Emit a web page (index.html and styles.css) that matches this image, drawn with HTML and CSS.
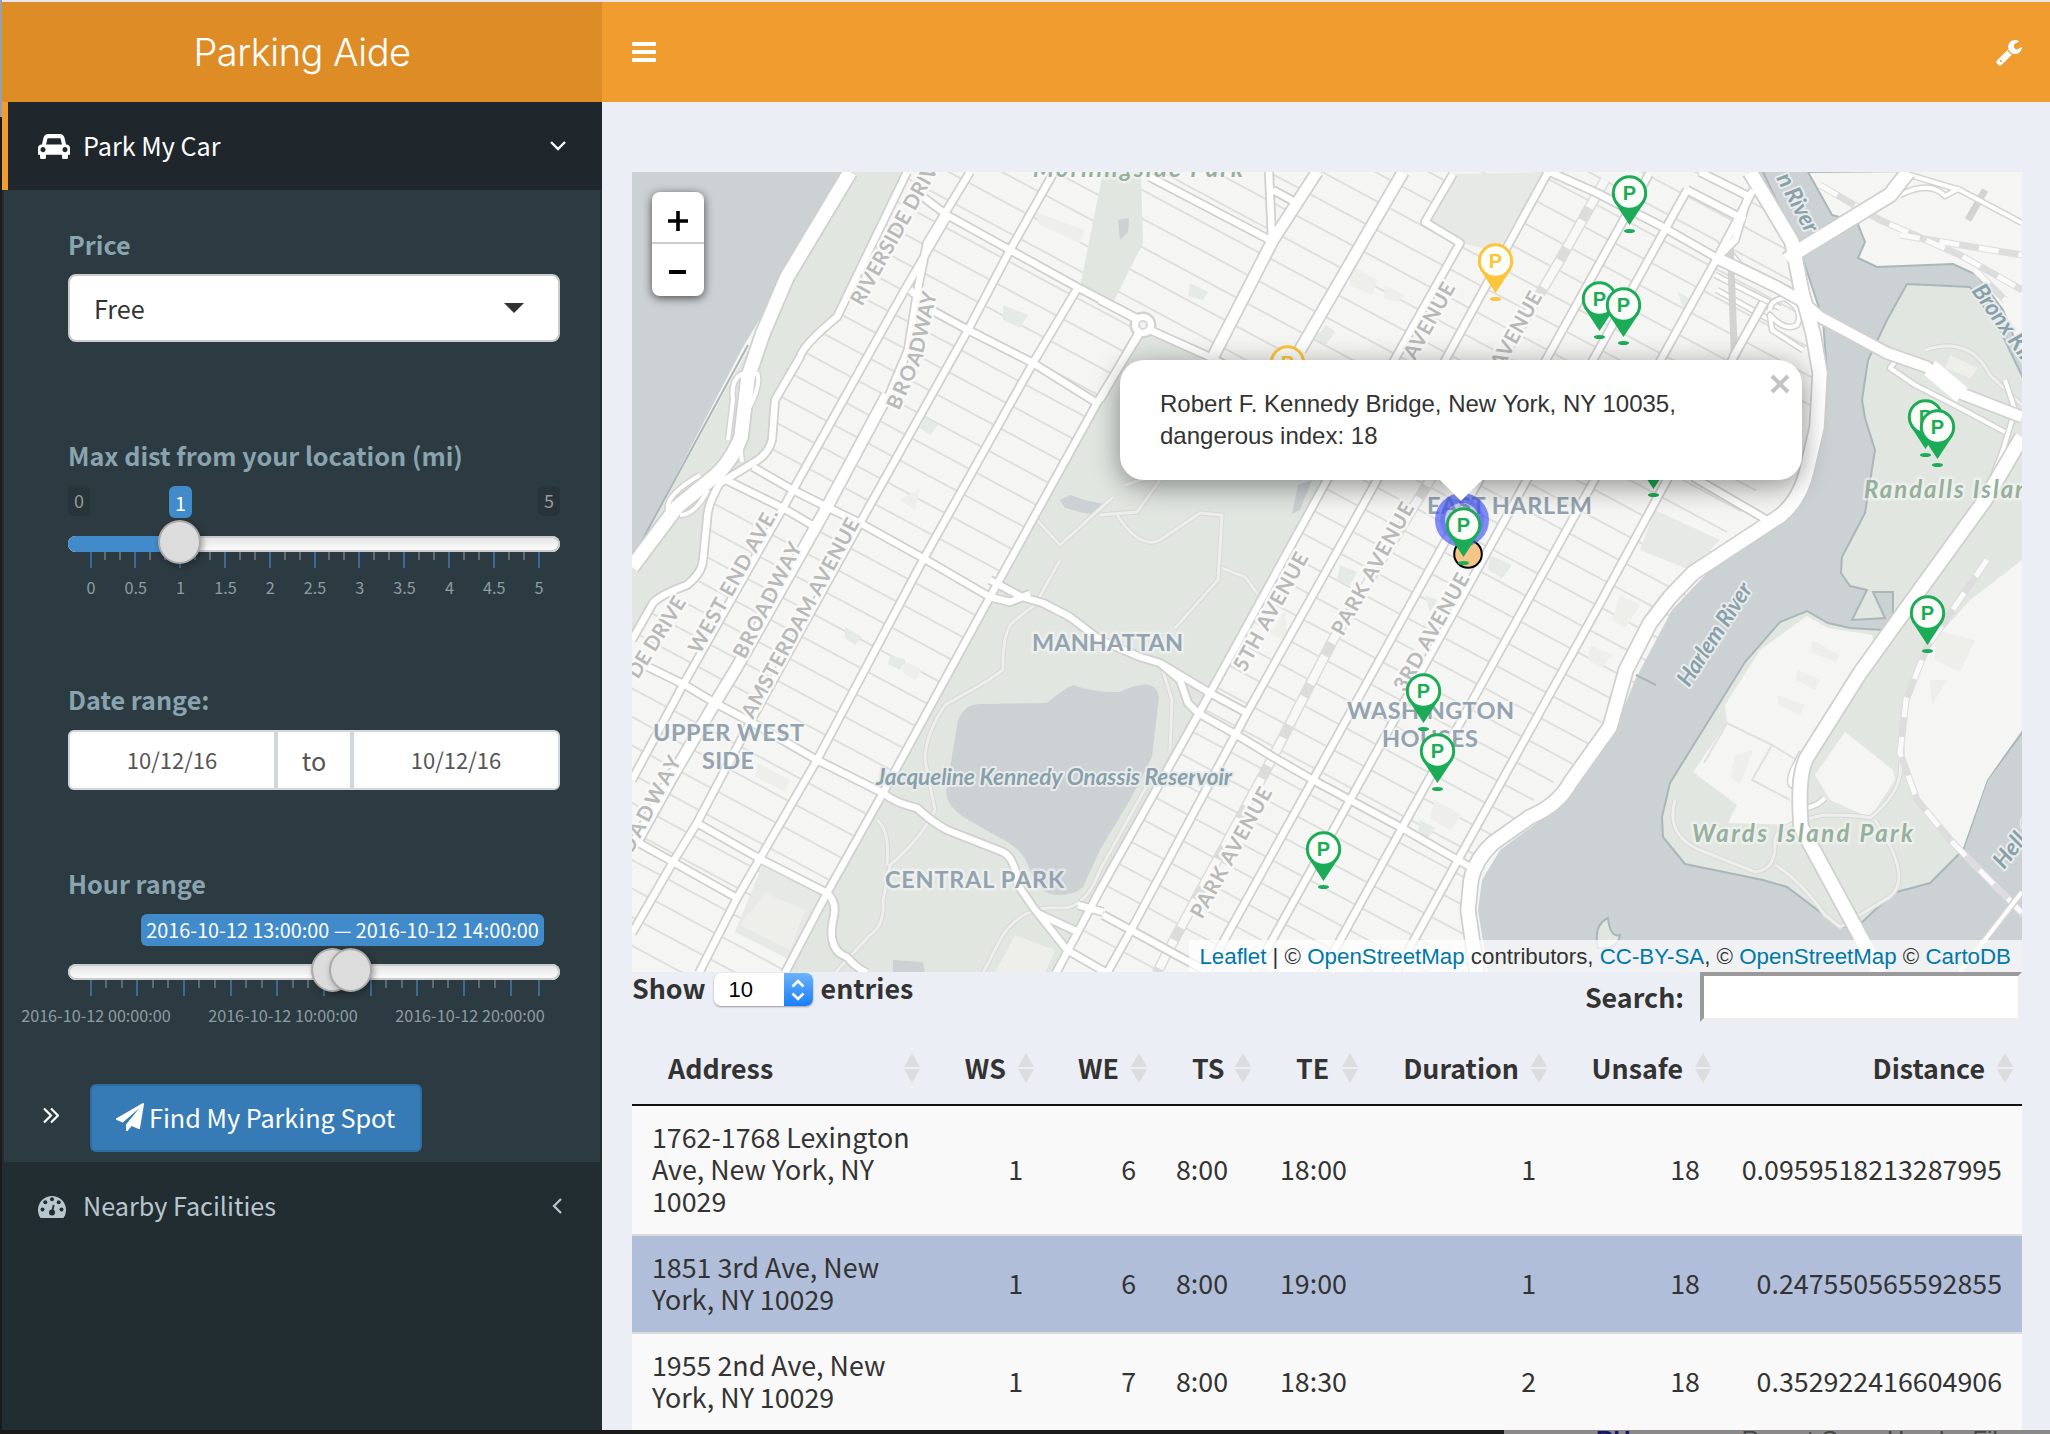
FILE: index.html
```html
<!DOCTYPE html>
<html lang="en">
<head>
<meta charset="utf-8">
<title>Parking Aide</title>
<link rel="stylesheet" href="styles.css">
</head>
<body>
<div class="desktop">
<div class="edge"></div>
<div class="window">
  <aside class="sidebar">
    <h1 class="logo">Parking Aide</h1>
    <div class="menu-item active">
      <svg class="car" viewBox="0 128 2048 1536" preserveAspectRatio="none"><path fill="currentColor" d="M480 1088q0-66-47-113t-113-47-113 47-47 113 47 113 113 47 113-47 47-113zm36-320h1016l-89-357q-2-8-14-17.500t-21-9.500h-768q-9 0-21 9.500t-14 17.500zm1372 320q0-66-47-113t-113-47-113 47-47 113 47 113 113 47 113-47 47-113zm160-96v384q0 14-9 23t-23 9h-96v128q0 80-56 136t-136 56-136-56-56-136v-128h-1024v128q0 80-56 136t-136 56-136-56-56-136v-128h-96q-14 0-23-9t-9-23v-384q0-93 65.500-158.500t158.500-65.500h28l105-419q23-94 104-157.500t179-63.500h768q98 0 179 63.500t104 157.500l105 419h28q93 0 158.500 65.500t65.500 158.500z"/></svg>
      <span class="menu-text">Park My Car</span>
      <svg class="chev" width="16" height="10" viewBox="0 0 16 10"><path d="M1 1l7 7 7-7" fill="none" stroke="currentColor" stroke-width="2.4"/></svg>
    </div>
    <div class="submenu">
      <label class="lab">Price</label>
      <div class="select">Free<svg width="20" height="10" viewBox="0 0 20 10"><path d="M0 0h20L10 10z" fill="#333"/></svg></div>

      <label class="lab dist-lab">Max dist from your location (mi)</label>
      <div class="slider dist">
        <span class="minmax lo">0</span><span class="minmax hi">5</span><span class="bubble one">1</span>
        <div class="track"><div class="fill"></div></div>
        <svg class="ticks" width="492" height="16" viewBox="68 0 492 16">
          <path class="tick-s" d="M105 0v8M120 0v8M150 0v8M165 0v8M195 0v8M210 0v8M240 0v8M255 0v8M285 0v8M300 0v8M329 0v8M344 0v8M374 0v8M389 0v8M419 0v8M434 0v8M464 0v8M479 0v8M509 0v8M524 0v8"/>
          <path class="tick-l" d="M91 0v16M135 0v16M180 0v16M225 0v16M270 0v16M315 0v16M359 0v16M404 0v16M449 0v16M494 0v16M539 0v16"/>
        </svg>
        <span class="knob k1"></span>
        <div class="scale"><span>0</span><span>0.5</span><span>1</span><span>1.5</span><span>2</span><span>2.5</span><span>3</span><span>3.5</span><span>4</span><span>4.5</span><span>5</span></div>
      </div>

      <label class="lab date-lab">Date range:</label>
      <div class="dates"><span class="date">10/12/16</span><span class="to">to</span><span class="date">10/12/16</span></div>

      <label class="lab hour-lab">Hour range</label>
      <div class="slider hour">
        <span class="bubble range">2016-10-12 13:00:00 — 2016-10-12 14:00:00</span>
        <div class="track"></div>
        <svg class="ticks" width="492" height="16" viewBox="68 0 492 16">
          <path class="tick-s" d="M106 0v8M122 0v8M153 0v8M168 0v8M199 0v8M215 0v8M246 0v8M262 0v8M293 0v8M308 0v8M340 0v8M355 0v8M386 0v8M402 0v8M433 0v8M448 0v8M479 0v8M495 0v8"/>
          <path class="tick-l" d="M91 0v16M137 0v16M184 0v16M231 0v16M277 0v16M324 0v16M371 0v16M417 0v16M464 0v16M511 0v16M539 0v16"/>
        </svg>
        <span class="knob k2"></span><span class="knob k3"></span>
        <div class="times"><span>2016-10-12 00:00:00</span><span>2016-10-12 10:00:00</span><span>2016-10-12 20:00:00</span></div>
      </div>

      <div class="go-row">
        <svg width="16" height="17" viewBox="0 0 16 17"><path d="M1 1.500l7 7-7 7M8 1.500l7 7-7 7" fill="none" stroke="#fff" stroke-width="2.200"/></svg>
        <div class="go"><svg width="28" height="28" viewBox="0 0 1792 1792"><path fill="#fff" d="M1764 11q33 24 27 64l-256 1536q-5 29-32 45-14 8-31 8-11 0-24-5l-453-185-242 295q-18 23-49 23-13 0-22-4-19-7-30.500-23.500t-11.500-36.500v-349l864-1059-1069 925-395-162q-37-14-40-55-2-40 32-59l1664-960q15-9 32-9 20 0 36 11z"/></svg><span>Find My Parking Spot</span></div>
      </div>
    </div>
    <div class="menu-item nearby">
      <svg width="28" height="23" viewBox="0 0 28 23"><path fill="#b8c7ce" d="M2.500 23A14 14 0 1 1 25.500 23z"/><g fill="#222d32"><circle cx="4.500" cy="14.500" r="2"/><circle cx="7.300" cy="7.200" r="2"/><circle cx="14" cy="4.300" r="2"/><circle cx="20.700" cy="7.200" r="2"/><circle cx="23.500" cy="14.500" r="2"/><circle cx="14" cy="17.500" r="3"/></g><path d="M14 17.500l1.700-7.500" stroke="#222d32" stroke-width="1.800"/></svg>
      <span class="menu-text">Nearby Facilities</span>
      <svg class="chev" width="10" height="16" viewBox="0 0 10 16"><path d="M9 1L2 8l7 7" fill="none" stroke="currentColor" stroke-width="2.200"/></svg>
    </div>
  </aside>

  <main class="main">
    <header class="topbar">
      <svg width="24" height="20" viewBox="0 0 24 20"><path fill="#fff" d="M1 0h22q1 0 1 1v2q0 1-1 1H1q-1 0-1-1V1q0-1 1-1zM1 8h22q1 0 1 1v2q0 1-1 1H1q-1 0-1-1V9q0-1 1-1zM1 16h22q1 0 1 1v2q0 1-1 1H1q-1 0-1-1v-2q0-1 1-1z"/></svg>
      <svg class="wrench" width="28" height="28" viewBox="0 0 1792 1792"><path fill="#fff" d="M448 1472q0-26-19-45t-45-19-45 19-19 45 19 45 45 19 45-19 19-45zm644-420l-682 682q-37 37-90 37-52 0-91-37l-106-108q-38-36-38-90 0-53 38-91l681-681q39 98 114.500 173.500t173.500 114.500zm634-435q0 39-23 106-47 134-164.500 217.500t-258.500 83.500q-185 0-316.500-131.500t-131.500-316.500 131.500-316.500 316.500-131.500q58 0 121.500 16.500t107.500 46.500q16 11 16 28t-16 28l-293 169v224l193 107q5-3 79-48.500t135.500-81 70.500-35.500q15 0 23.500 10t8.500 25z"/></svg>
    </header>
    <section class="content">
      <div class="map">
        <svg class="tiles" width="1390" height="800" viewBox="632 172 1390 800">
          <defs>
            <pattern id="streets" width="400" height="25.200" patternUnits="userSpaceOnUse" patternTransform="translate(640 663) rotate(28.200)"><path d="M0 1H400" stroke="#dfdfde" stroke-width="2"/></pattern>
            <g id="avenues">
              <path d="M947 217L903 293 783 508 683 685 632 780M970 172L927 243 917 293 908 350 887 400M1054 172L1010 250 968 330 860 523 753 717 697 823 673 862 632 933M1077 289L1033 363 923 560 817 760 737 898 699 973M1140 333L1097 403 990 597 883 793 827 893 785 973"/>
              <path d="M1143 325L1100 400M1453 174L1425 222 1460 243 1327 480 1210 693 1198 715 1100 890 1056 973M1548 172L1447 357 1377 480 1247 713 1130 932 1107 973M1649 174L1313 780 1206 973M1687 190L1350 800 1254 973M1753 190L1716 260 1402 828 1322 973M1763 303L1598 607 1458 860 1396 973"/>
              <path d="M923 197L947 215 1010 250 1077 287 1140 320M910 290L935 312 968 330 1033 363 1097 403M1100 300L1138 320M1150 330L1210 357 1353 433M753 467L793 490 827 507 860 523 923 558 990 597 1010 602 1030 594M990 580L1022 597 1043 603 1070 617 1100 640 1140 657 1160 663 1210 693 1247 713M1160 663L1180 680 1188 703 1198 713 1237 735 1273 757 1313 780 1350 800 1402 828 1470 867"/>
              <path d="M720 477L783 508 812 525M640 663L685 685 715 703 753 723 817 760 883 793Q895 803 917 808 932 822 947 830L1003 852Q1015 858 1018 885L1033 907 1067 950 1107 973M1037 913L1078 932M632 839L673 862 737 898M697 823L762 860 827 893Q838 903 833 920 827 950 847 957 855 967 867 973M1103 915L1140 935 1180 957 1210 973M1103 912L1078 905"/>
              <path d="M1150 177L1270 240M1269 172L1272 240M1273 190L1295 202 1285 225M1550 172L1597 193 1663 227 1717 258M1687 190L1745 220M1700 172L1748 196 1735 240 1717 258M1693 477L1767 520M1764 303L1733 357"/>
              <path d="M907 172L837 317Q803 345 800 357L775 400 772 440Q768 455 753 463L720 483Q707 505 707 520L703 560Q702 573 687 585 660 595 653 603L632 640"/>
            </g>
            <g id="wide">
              <path d="M1317 172L1273 240 1213 357M1403 172L1300 350M887 395L827 507 737 667 715 703 673 775 637 840"/>
              <path d="M1717 258L1777 287 1800 300 1820 317 1887 353 1927 367 1960 393 2022 417"/>
            </g>
            <g id="highway">
              <path d="M850 172L787 277 763 333 748 377 741 437Q730 465 710 480L677 507 632 567"/>
              <path d="M1750 172L1767 200 1792 242 1802 293 1813 333 1820 373 1817 427 1807 470Q1800 500 1780 516L1693 573 1670 597 1650 623 1626 670 1610 727 1570 783Q1558 805 1530 817L1493 843Q1475 860 1471 880L1468 910 1477 973"/>
              <path d="M2022 437L1985 500 1927 580 1860 673 1807 757Q1797 775 1801 827L1880 973"/>
              <path d="M1787 260L1800 250 1890 195 1908 172"/>
            </g>
            <g id="paths">
              <path d="M1060 560L1035 605 1015 620Q1002 630 1003 670 990 680 975 688L945 705Q925 735 925 760L935 810Q920 840 890 865L883 900Q885 925 870 935L835 973M1100 515L1137 512 1160 480M1117 515Q1140 550 1160 540L1200 513 1222 515 1218 580 1175 628M1222 568L1245 577 1258 594M1162 668L1172 700 1170 750M1150 780L1100 870Q1085 910 1060 908 1020 905 1000 940L983 973M877 820Q890 830 887 865M1113 497L1060 545 1037 520M1172 470L1125 485"/>
              <path d="M1730 550L1728 540M1925 350Q1970 335 1990 375L2022 405M1675 800Q1665 835 1700 850L1755 872Q1775 870 1775 845 1770 825 1825 815 1860 815 1870 818 1905 790 1900 760M1775 865Q1800 880 1825 915L1840 927 1888 898Q1915 880 1875 820"/>
            </g>
            <g id="pin">
              <path d="M-15.500 8.500L0 32 15.500 8.500z" fill="currentColor"/>
              <circle r="16.200" fill="#fbfdf9" stroke="currentColor" stroke-width="3"/>
              <ellipse cy="38" rx="5.600" ry="2.100" fill="currentColor"/>
              <text y="6.800" text-anchor="middle" class="pin-p">P</text>
            </g>
          </defs>
          <rect x="632" y="172" width="1390" height="800" fill="#f5f5f3"/>
          <path d="M850 172H1780L1820 400 1700 570 1610 730 1480 850 1475 973H632V600z" fill="url(#streets)"/>
          <path class="park" d="M632 560L846 172H907L837 317Q803 345 800 357L775 400 772 440Q768 455 753 463L707 500 703 567 653 603 632 640z"/>
          <path class="water" d="M632 172H846L785 277 743 347 645 535 632 560z"/>
          <path class="shore" d="M748 345L645 535 632 562"/>
          <path class="park" d="M1143 335Q1180 335 1353 433L1056 973H785L1097 403zM1103 172H1141L1143 243 1113 303 1080 287z"/>
          <path class="park2" d="M1453 174L1427 222 1462 243 1497 252 1545 172zM762 866L827 895 790 960 735 932zM1655 510L1720 540 1690 570 1640 550z"/>
          <path class="bld" d="M765 893L805 910 790 950 740 925zM1015 935L1055 950 1045 973H995zM1035 212L1085 230 1080 243 1040 225zM1350 265L1378 280 1372 295 1350 285zM1385 285L1405 295 1398 302 1384 298zM900 500L920 488 915 510zM758 763L790 780 785 792 755 776zM905 662L922 670 915 680 902 672zM1620 595L1640 605 1625 628 1612 620zM1590 645L1612 655 1602 668 1588 660zM1435 800L1462 815 1450 830 1430 818zM1270 635L1285 610 1288 640z"/>
          <path class="bld2" d="M1003 305L1028 315 1020 328 1003 320zM1190 283L1208 292 1203 300 1188 296zM1326 325L1336 332 1325 345 1315 338zM845 627L862 637 855 645 845 638zM890 655L906 660 900 670 888 664zM925 417L938 425 930 435 920 428zM1490 555L1512 565 1502 578 1488 570zM1425 595L1437 600 1430 612zM1420 820L1435 828 1428 838 1418 832zM1340 565L1357 572 1350 585 1337 580zM1678 292L1693 300 1685 315z"/>
          <path class="water" d="M958 720Q965 703 983 704L1047 703Q1062 690 1073 685 1095 693 1120 692 1155 675 1159 697L1152 757 1130 800 1100 850 1083 887Q1075 895 1057 895 1040 895 1030 870 1025 850 1000 838L965 818Q947 806 946 793z"/>
          <path class="water" d="M1060 500L1070 495 1085 500 1108 505 1095 515 1080 512 1065 508zM893 960L923 962 925 973H893zM1118 220L1129 218 1128 232 1120 240zM1298 485L1312 480 1300 510 1292 514z"/>
          <path class="water" d="M1752 172L1800 250 1823 320 1827 373 1823 427 1815 470Q1805 505 1767 530L1707 573 1672 610 1635 680 1612 737 1575 790 1538 822 1500 850 1482 880 1478 910 1488 973H2022V172z"/>
          <path class="shore" d="M1763 172L1800 250 1823 320 1827 373M1636 675L1656 685"/>
          <path class="land" d="M1808 172L1832 215 1857 222 1865 242 1858 258 1877 267 1953 264 1977 275 2003 310 2024 362V170z"/>
          <path class="park edge-line" d="M1907 284L1970 287 2000 330 2024 380V730L1987 780 1963 850 1930 883 1893 893 1857 927 1840 927 1787 887 1763 880 1685 864 1663 837 1662 817 1670 783 1745 662 1780 622 1807 611 1828 623 1850 628 1883 630 1893 617 1893 592 1873 592 1885 618 1852 620 1867 590 1850 586 1841 573 1842 557 1865 513 1875 450 1865 418 1862 400 1868 360 1887 320z"/>
          <path class="land-fill" d="M1760 650L1807 616 1828 628 1872 635 1878 655 1830 730 1800 765 1798 825 1728 823 1737 805 1693 772 1727 723 1725 705zM1845 732L1893 770 1895 780 1870 818 1830 800 1815 775zM2022 560L1970 600 1927 648 1905 700 1905 760 1918 800 1963 848 1987 780 2022 730z"/>
          <path class="bld" d="M1812 640L1840 655 1835 662 1810 652zM1798 670L1820 680 1815 690 1796 680zM1778 695L1805 705 1800 715 1778 705zM1935 630L1975 640 1960 672 1935 660zM1930 680L1947 680 1932 705zM1950 355L1978 368 1970 378 1945 368zM1735 755L1753 750 1740 785 1730 778z"/>
          <path d="M1727 723L1772 745 1800 762M1772 745L1752 780 1790 800M1704 763L1727 723" class="thin"/>
          <path class="park edge-line" d="M1598 948Q1593 925 1608 918 1610 938 1620 935 1618 950 1598 948z"/>
          <use href="#paths" class="p1"/><use href="#paths" class="p2"/>
          <path d="M1605 180L1560 260 1430 480 1333 640 1273 757 1167 953 1157 973" stroke="#dcdcdb" stroke-width="11" fill="none"/>
          <path d="M1605 180L1560 260 1430 480 1333 640 1273 757 1167 953 1157 973" stroke="#f8f8f8" stroke-width="8" stroke-dasharray="32 14" fill="none"/>
          <path d="M1820 185L1880 220 1960 255 2022 290M1900 235L2022 255M1987 560L1927 647 1906 700 1900 753 1917 800 1953 843 2024 915M1975 270L2005 300" class="rail"/>
          <path d="M1820 185L1880 220 1960 255 2022 290M1900 235L2022 255M1987 560L1927 647 1906 700 1900 753 1917 800 1953 843 2024 915M1975 270L2005 300" class="rail-d"/>
          <path d="M1900 172L1960 190 2022 223M1900 195Q1930 180 1945 196L1960 188M1968 220L1985 190M2022 892L1960 972M1720 240L1740 265 1790 290M1715 275L1780 308M1717 290L1770 320" class="c5"/>
          <path d="M1900 172L1960 190 2022 223M1900 195Q1930 180 1945 196L1960 188M2022 892L1960 972M1720 240L1740 265 1790 290M1715 275L1780 308M1717 290L1770 320" class="f5"/>
          <path d="M1733 357L1765 302M1898 358L1890 368 1915 385 1960 408 2005 432M2005 380L2015 410 2003 450 1980 510M1770 310Q1770 300 1785 298 1805 310 1797 325 1785 332 1770 315L1772 330 1803 350M1800 260V310M1810 310L1818 340M1735 370L1730 240M1800 785Q1785 790 1793 770L1802 752M1803 808Q1815 808 1825 798" class="c5"/>
          <path d="M1898 358L1890 368 1915 385 1960 408 2005 432M2005 380L2015 410 2003 450 1980 510M1770 310Q1770 300 1785 298 1805 310 1797 325 1785 332 1770 315L1772 330 1803 350M1800 260V310M1800 785Q1785 790 1793 770L1802 752M1803 808Q1815 808 1825 798" class="f5"/>
          <use href="#avenues" class="a1"/><use href="#wide" class="w1"/><use href="#highway" class="h1"/>
          <path d="M748 372Q730 375 733 400L728 440M757 372Q762 385 748 410 738 440 742 462M700 475Q665 495 668 510M708 490Q695 515 680 515" class="c5"/>
          <path d="M748 372Q730 375 733 400L728 440M757 372Q762 385 748 410 738 440 742 462M700 475Q665 495 668 510M708 490Q695 515 680 515" class="f5"/>
          <circle cx="1143" cy="325" r="9" fill="none" stroke="#d3d3d2" stroke-width="9"/>
          <use href="#avenues" class="a2"/><use href="#wide" class="w2"/><use href="#highway" class="h2"/>
          <circle cx="1143" cy="325" r="8" fill="#d8d8d7" stroke="#fff" stroke-width="6"/><circle cx="1143" cy="325" r="3" fill="#f2f2f1"/>
          <path d="M1930 368L1962 395" stroke="#fff" stroke-width="18"/>

          <g class="st">
            <text transform="translate(862 307) rotate(-61)" textLength="170">RIVERSIDE DRIVE</text>
            <text transform="translate(899 411) rotate(-66)" textLength="62">BROA</text>
            <text transform="translate(923 354) rotate(-77)" textLength="62">DWAY</text>
            <text transform="translate(700 655) rotate(-61)" textLength="162">WEST END AVE.</text>
            <text transform="translate(745 660) rotate(-63)" textLength="127">BROADWAY</text>
            <text transform="translate(753 720) rotate(-61.500)" textLength="224">AMSTERDAM AVENUE</text>
            <text transform="translate(638 680) rotate(-58)" textLength="92">DE DRIVE</text>
            <text transform="translate(631 856) rotate(-62)" textLength="108">OADWAY</text>
            <text transform="translate(1245 673) rotate(-61)" textLength="132">5TH AVENUE</text>
            <text transform="translate(1343 637) rotate(-61)" textLength="148">PARK AVENUE</text>
            <text transform="translate(1405 693) rotate(-60.500)" textLength="132">3RD AVENUE</text>
            <text transform="translate(1202 920) rotate(-61)" textLength="146">PARK AVENUE</text>
            <text transform="translate(1415 361) rotate(-61)" textLength="84">AVENUE</text>
            <text transform="translate(1502 370) rotate(-61)" textLength="84">AVENUE</text>
          </g>
          <g class="place">
            <text x="1032" y="651" textLength="151">MANHATTAN</text>
            <text x="653" y="741" textLength="151">UPPER WEST</text><text x="702" y="769" textLength="52">SIDE</text>
            <text x="885" y="888" textLength="179">CENTRAL PARK</text>
            <text x="1427" y="514" textLength="165">EAST HARLEM</text>
            <text x="1347" y="719" textLength="167">WASHINGTON</text><text x="1382" y="747" textLength="96">HOUSES</text>
          </g>
          <g class="wtr">
            <text x="876" y="785" textLength="356">Jacqueline Kennedy Onassis Reservoir</text>
            <text transform="translate(1689 688) rotate(-57)" textLength="118">Harlem River</text>
            <text transform="translate(1776 178) rotate(62)" textLength="64">n River</text>
            <text transform="translate(1971 291) rotate(54)" textLength="92">Bronx Kill</text>
            <text transform="translate(2004 870) rotate(-52)" textLength="90">Hell Gate</text>
          </g>
          <g class="green">
            <text x="1033" y="177" textLength="210">Morningside Park</text>
            <text x="1864" y="498" textLength="179">Randalls Island</text>
            <text x="1692" y="842" textLength="221">Wards Island Park</text>
          </g>

          <circle cx="1468" cy="554" r="13.800" fill="#f5c588" stroke="#000" stroke-width="2"/>
          <circle cx="1462" cy="520" r="22" fill="#3d4fe0" fill-opacity=".25" stroke="#3d52f5" stroke-opacity=".65" stroke-width="10"/>
          <g class="pg"><use href="#pin" x="1629.500" y="193"/><use href="#pin" x="1599.500" y="299"/><use href="#pin" x="1623.500" y="305"/><use href="#pin" x="1925.500" y="417"/><use href="#pin" x="1937.500" y="427"/><use href="#pin" x="1927.500" y="613"/><use href="#pin" x="1653.500" y="457"/><use href="#pin" x="1463.500" y="525"/><use href="#pin" x="1423.500" y="691"/><use href="#pin" x="1437.500" y="751"/><use href="#pin" x="1323.500" y="849"/></g>
          <g class="py"><use href="#pin" x="1495.500" y="261"/><use href="#pin" x="1287.500" y="363"/></g>
        </svg>
        <div class="zoom"><span><svg width="20" height="20" viewBox="0 0 20 20"><path d="M0 10H20M10 0V20" stroke="#000" stroke-width="3.600"/></svg></span><span><svg width="17" height="20" viewBox="0 0 17 20"><path d="M0 10H17" stroke="#000" stroke-width="4"/></svg></span></div>
        <div class="popup">Robert F. Kennedy Bridge, New York, NY 10035,<br>dangerous index: 18
          <svg class="close" width="20" height="20" viewBox="0 0 20 20"><path d="M2 2L18 18M18 2L2 18" stroke="#c3c3c3" stroke-width="4"/></svg>
          <svg class="tip" width="44" height="22" viewBox="0 0 44 22"><path d="M0 0H44L22 22z" fill="#fff"/></svg>
        </div>
        <div class="attr"><a>Leaflet</a> | © <a>OpenStreetMap</a> contributors, <a>CC-BY-SA</a>, © <a>OpenStreetMap</a> © <a>CartoDB</a></div>
      </div>

      <div class="controls">
        <div class="length">Show <span class="num"><span>10</span><i><svg width="16" height="24" viewBox="0 0 16 24"><path d="M2.500 8.500L8 3l5.500 5.500M2.500 15.500L8 21l5.500-5.500" fill="none" stroke="#fff" stroke-width="2.600"/></svg></i></span> entries</div>
        <div class="search">Search: <span class="box"></span></div>
      </div>
      <table class="grid">
        <colgroup><col class="c-addr"><col class="c-ws"><col class="c-we"><col class="c-ts"><col class="c-te"><col class="c-dur"><col class="c-uns"><col class="c-dis"></colgroup>
        <thead><tr><th class="text">Address</th><th>WS</th><th>WE</th><th class="text">TS</th><th class="text">TE</th><th>Duration</th><th>Unsafe</th><th>Distance</th></tr></thead>
        <tbody>
          <tr><td class="text">1762-1768 Lexington<br>Ave, New York, NY<br>10029</td><td>1</td><td>6</td><td class="text">8:00</td><td class="text">18:00</td><td>1</td><td>18</td><td>0.0959518213287995</td></tr>
          <tr class="sel"><td class="text">1851 3rd Ave, New<br>York, NY 10029</td><td>1</td><td>6</td><td class="text">8:00</td><td class="text">19:00</td><td>1</td><td>18</td><td>0.247550565592855</td></tr>
          <tr><td class="text">1955 2nd Ave, New<br>York, NY 10029</td><td>1</td><td>7</td><td class="text">8:00</td><td class="text">18:30</td><td>2</td><td>18</td><td>0.352922416604906</td></tr>
        </tbody>
      </table>
    </section>
  </main>
</div>
<footer class="behind"><div class="behind-r"><span class="rh">RH</span><span>Report Gram Header Fil</span></div></footer>
</div>
</body>
</html>
```
FILE: styles.css
```css
* { box-sizing: border-box; }
body { margin: 0; width: 2050px; height: 1434px; overflow: hidden; background: #1b1a1b; color: #333; font-family: "Noto Sans CJK SC", "Open Sans", sans-serif; font-size: 25.200px; line-height: 32px; }
svg { display: block; flex: none; }
.desktop { display: grid; grid-template: 1430px 4px / 2px 2048px; }
.edge { background: linear-gradient(#97a0a8 117px, #1b1b1c 117px); }
.window { display: grid; grid-template-columns: 600px 1448px; overflow: hidden; border-top: 2px solid #e6e7ec; background: #ebeef4; }
.behind { grid-column: 1 / 3; height: 4px; overflow: hidden; display: flex; justify-content: flex-end; }
.behind-r { width: 546px; height: 4px; overflow: hidden; background: #8b898a; padding-left: 92px; display: flex; gap: 111px; font: 24px/20px "Liberation Sans", sans-serif; color: #444; }
.rh { color: #15156e; font-weight: bold; }

.sidebar { background: #222d32; height: 1428px; }
.logo { margin: 0; height: 100px; background: #de8d26; color: #fff; text-align: center; font: 300 38px/100px "Inter", "Liberation Sans", sans-serif; letter-spacing: -0.5px; }
.menu-item { display: flex; align-items: center; }
.active { height: 88px; border-left: 6px solid #f19c2e; background: #1f272c; color: #fff; padding: 0 36px 0 30px; }
.car { width: 32px; height: 25px; }
.menu-text { flex: 1; margin: -2px 0 0 13px; }
.submenu { height: 972px; margin: 0 2px; background: #2c3b41; padding: 38px 40px 0 64px; }
.lab { display: block; height: 46px; color: #8aa4af; font-weight: bold; line-height: 32px; }
.select { height: 68px; border: 2px solid #ccc; border-radius: 8px; background: #fff; display: flex; align-items: center; justify-content: space-between; padding: 0 34px 1px 24px; }
.dist-lab { margin-top: 97px; height: 47px; }
.slider { position: relative; color: #8f9ca1; }
.dist { height: 196px; padding-top: 50px; }
.minmax, .bubble { position: absolute; top: 0; border-radius: 6px; text-align: center; font-size: 18px; }
.minmax { width: 22px; height: 30px; line-height: 29px; background: #273439; color: #999; }
.lo { left: 0; }
.hi { right: 0; }
.bubble { background: #428bca; color: #fff; height: 32px; line-height: 33px; }
.one { left: 101px; width: 23px; font-size: 19.700px; }
.track { height: 16px; border-radius: 8px; background: linear-gradient(#e2e2e2, #fff); box-shadow: inset 0 0 0 2px #ccc; overflow: hidden; }
.fill { width: 112px; height: 16px; background: #428bca; }
.tick-s { stroke: #5f6b6e; stroke-width: 2; }
.tick-l { stroke: #3b6a92; stroke-width: 2; }
.knob { position: absolute; width: 43px; height: 44px; border-radius: 50%; background: #dcdcdc; border: 2px solid #aaa; box-shadow: 2px 2px 6px rgba(0, 0, 0, .35); }
.k1 { left: 90px; top: 34px; }
.scale { display: flex; justify-content: space-between; margin: 3px 1px 0 3px; font-size: 16.200px; }
.scale span { width: 40px; text-align: center; }
.date-lab { margin-top: 1px; height: 47px; }
.dates { display: grid; grid-template-columns: 1fr 80px 1fr; height: 60px; border: 2px solid #d2d6de; border-radius: 6px; background: #fff; text-align: center; line-height: 56px; color: #555; }
.date { font-size: 22px; line-height: 55px; }
.to { border: 4px solid #d2d6de; border-width: 0 4px; }
.hour-lab { margin-top: 77px; height: 47px; }
.hour { height: 170px; padding-top: 50px; }
.range { left: 73px; width: 403px; font-size: 19.800px; line-height: 31px; white-space: nowrap; }
.k2 { left: 243px; top: 34px; }
.k3 { left: 261px; top: 34px; }
.times { display: flex; gap: 37px; margin: 3px 0 0 -47px; font-size: 16.200px; white-space: nowrap; }
.times span { width: 150px; text-align: center; }
.go-row { display: flex; align-items: center; gap: 31px; margin-left: -25px; }
.go-row > svg { margin-top: -6px; }
.go { width: 332px; height: 68px; border: 2px solid #2e6da4; border-radius: 6px; background: #367bb6; color: #fff; display: flex; align-items: center; gap: 5px; padding: 0 0 2px 24px; white-space: nowrap; }
.nearby { height: 88px; color: #b8c7ce; padding: 0 40px 0 36px; }
.nearby .menu-text { margin-left: 17px; }

.topbar { height: 100px; background: #f19c2e; display: flex; align-items: center; justify-content: space-between; padding: 0 27px 0 30px; }
.content { padding: 70px 28px 0 30px; }
.map { position: relative; width: 1390px; height: 800px; overflow: hidden; }
.water { fill: #ccd1d4; }
.park { fill: #e1e6e1; }
.park2 { fill: #e6e9e6; }
.bld { fill: #eeeeea; }
.bld2 { fill: #e6eae7; }
.land { fill: #f5f5f3; stroke: #a9b7b9; stroke-width: 2; }
.land-fill { fill: #f5f5f3; }
.shore, .edge-line { stroke: #a9b7b9; stroke-width: 2; }
.shore { fill: none; }
.thin { fill: none; stroke: #e0e0df; stroke-width: 2; }
.p1, .p2 { fill: none; }
.p1 { stroke: #d8d9d7; stroke-width: 5; }
.p2 { stroke: #eeeeec; stroke-width: 3; }
.a1, .a2, .w1, .w2, .h1, .h2, .c5, .f5, .rail, .rail-d { fill: none; stroke-linejoin: round; }
.a1 { stroke: #d0d0cf; stroke-width: 10; }
.a2 { stroke: #fff; stroke-width: 6.500; }
.w1 { stroke: #d0d0cf; stroke-width: 14; }
.w2 { stroke: #fff; stroke-width: 10.500; }
.h1 { stroke: #cfcfce; stroke-width: 17; }
.h2 { stroke: #fff; stroke-width: 13.500; }
.c5 { stroke: #d3d3d2; stroke-width: 7; }
.f5 { stroke: #fff; stroke-width: 4; }
.rail { stroke: #dcdddc; stroke-width: 7; }
.rail-d { stroke: #fafafa; stroke-width: 5; stroke-dasharray: 20 20; }
.tiles text { font-family: "Lato", "Open Sans", sans-serif; }
.st text, .place text, .wtr text, .green text { paint-order: stroke; stroke: #f8f8f7; stroke-width: 5px; stroke-linejoin: round; }
.st { fill: #b9b9b9; font-size: 20.500px; font-weight: bold; }
.place { fill: #93a3b0; font-size: 23.500px; font-weight: bold; }
.place text, .green text { stroke-opacity: .55; }
.wtr { fill: #87a0a9; font-size: 23px; font-weight: bold; font-style: italic; }
.wtr text { stroke: #e8ebeb; stroke-width: 4px; }
.green { fill: #95b09b; font-size: 24px; font-weight: bold; font-style: italic; }
.pg { color: #1cab57; }
.py { color: #ffc53a; }
.tiles .pin-p { font: bold 20px "Liberation Sans", sans-serif; fill: currentColor; }
.zoom { position: absolute; left: 20px; top: 20px; width: 52px; height: 104px; border-radius: 8px; background: #fff; box-shadow: 0 2px 10px rgba(0, 0, 0, .65); }
.zoom span { height: 52px; display: flex; align-items: center; justify-content: center; }
.zoom span:first-child { border-bottom: 2px solid #ccc; padding-top: 7px; }
.zoom span:last-child { padding: 3px 2px 0 0; }
.popup { position: absolute; left: 488px; top: 188px; width: 682px; height: 120px; border-radius: 24px; background: #fff; box-shadow: 0 6px 28px rgba(0, 0, 0, .42); padding: 28px 40px; font: 24px/32px "Liberation Sans", sans-serif; white-space: nowrap; color: #333; }
.close { position: absolute; right: 12px; top: 14px; }
.tip { position: absolute; left: 319px; top: 119px; }
.attr { position: absolute; right: 0; bottom: 0; height: 32px; padding: 0 11px 0 10px; background: rgba(255, 255, 255, .7); font: 22.300px/33px "Liberation Sans", sans-serif; white-space: nowrap; }
.attr a { color: #0078a8; }

.controls { display: flex; justify-content: space-between; height: 60px; font-weight: bold; font-size: 26.800px; }
.length { display: flex; align-items: center; height: 32px; gap: 8px; }
.num { display: flex; width: 99px; height: 33px; margin-top: 3px; border-radius: 7px; overflow: hidden; background: #fff; box-shadow: 0 1px 2px rgba(0, 0, 0, .35); font: 22px/33px "Liberation Sans", sans-serif; color: #000; }
.num span { flex: 1; padding-left: 15px; }
.num i { width: 29px; background: linear-gradient(#6cb3fa, #1a7efb); display: flex; align-items: center; justify-content: center; }
.search { display: flex; align-items: center; gap: 16px; height: 50px; }
.box { width: 322px; height: 50px; border: 4px solid; border-color: #9a9a9a #eee #eee #9a9a9a; background: #fff; }
.grid { table-layout: fixed; width: 1390px; border-collapse: separate; border-spacing: 0; font-size: 26.800px; }
.c-addr { width: 297px; } .c-ws { width: 114px; } .c-we { width: 113px; } .c-ts { width: 104px; } .c-te { width: 107px; } .c-dur { width: 189px; } .c-uns { width: 164px; } .c-dis { width: 302px; }
.grid th { height: 74px; padding: 0 37px 1px 0; border-bottom: 2px solid #111; text-align: right; vertical-align: middle; font-weight: bold; position: relative; }
.grid th::before, .grid th::after { content: ""; position: absolute; right: 9px; border: 8px solid transparent; }
.grid th::before { top: 21px; border-width: 0 8px 14px; border-bottom-color: #dbdcdd; }
.grid th::after { top: 37px; border-width: 14px 8px 0; border-top-color: #dbdcdd; }
.grid td { padding: 15px 20px 17px; text-align: right; border-bottom: 2px solid #ddd; background: #f9f9f9; white-space: nowrap; }
.grid .text { text-align: left; }
.grid th.text { padding-left: 36px; padding-right: 0; }
.sel td { background: #b0bed9 !important; }
```
